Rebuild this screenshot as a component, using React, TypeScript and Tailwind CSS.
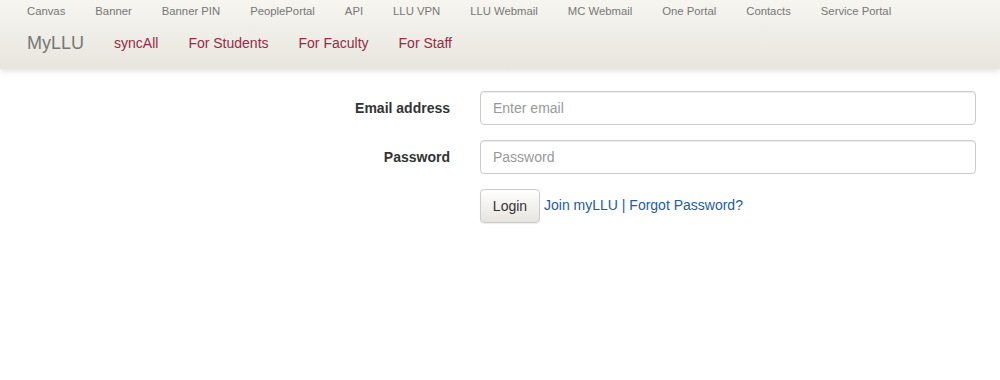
import React from 'react';

const topLinks = ['Canvas', 'Banner', 'Banner PIN', 'PeoplePortal', 'API', 'LLU VPN', 'LLU Webmail', 'MC Webmail', 'One Portal', 'Contacts', 'Service Portal'];
const mainLinks = ['syncAll', 'For Students', 'For Faculty', 'For Staff'];

const App: React.FC = () => {
  return (
    <div className="min-h-[380px] bg-white" style={{ fontFamily: '"Liberation Sans", Arial, sans-serif' }}>
      {/* navbar */}
      <div className="h-[69px] bg-gradient-to-b from-[#f6f5f0] to-[#e8e6de] shadow-[0_2px_6px_rgba(0,0,0,0.12)] px-3">
        <ul className="flex h-[22px] items-center text-[11.3px] text-[#777]">
          {topLinks.map((l) => (
            <li key={l} className="px-[15px]">{l}</li>
          ))}
        </ul>
        <div className="flex h-[42px] items-center">
          <span className="px-[15px] text-[18px] text-[#777]">MyLLU</span>
          {mainLinks.map((l) => (
            <span key={l} className="px-[15px] text-[14px] text-[#962b47]">{l}</span>
          ))}
        </div>
      </div>

      {/* login form */}
      <div className="mt-[22px] flex flex-col gap-[15px] text-[14px] text-[#333]">
        <div className="flex items-center">
          <label className="w-[450px] text-right font-bold">Email address</label>
          <input
            className="ml-[30px] h-[34px] w-[496px] rounded-[4px] border border-[#ccc] px-3 text-[14px] placeholder:text-[#999] shadow-[inset_0_1px_1px_rgba(0,0,0,0.075)]"
            placeholder="Enter email"
          />
        </div>
        <div className="flex items-center">
          <label className="w-[450px] text-right font-bold">Password</label>
          <input
            type="password"
            className="ml-[30px] h-[34px] w-[496px] rounded-[4px] border border-[#ccc] px-3 text-[14px] placeholder:text-[#999] shadow-[inset_0_1px_1px_rgba(0,0,0,0.075)]"
            placeholder="Password"
          />
        </div>
        <div className="flex items-center pl-[480px]">
          <button className="h-[34px] w-[60px] rounded-[4px] border border-[#ccc] bg-gradient-to-b from-white to-[#e6e4dd] text-[14px] text-[#333] shadow-[0_1px_1px_rgba(0,0,0,0.08)]">
            Login
          </button>
          <span className="ml-[4px] -mt-[2px] text-[#245c9d]">Join myLLU | Forgot Password?</span>
        </div>
      </div>
    </div>
  );
};

export default App;
